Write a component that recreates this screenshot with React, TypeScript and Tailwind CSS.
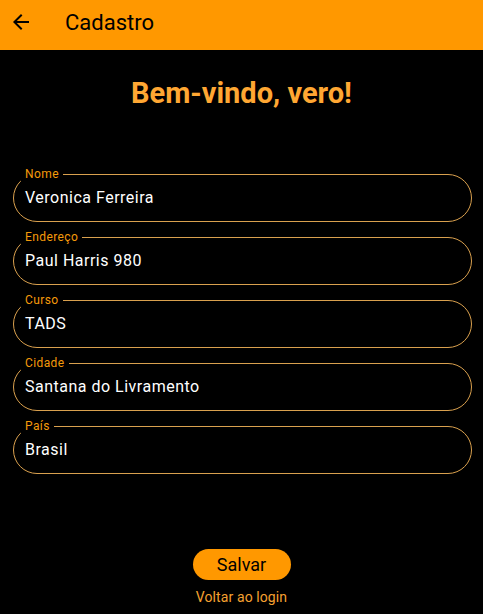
const fields = [
  { label: "Nome", value: "Veronica Ferreira" },
  { label: "Endereço", value: "Paul Harris 980" },
  { label: "Curso", value: "TADS" },
  { label: "Cidade", value: "Santana do Livramento" },
  { label: "País", value: "Brasil" },
];

const Field = ({ label, value }: { label: string; value: string }) => (
  <fieldset className="w-full rounded-[24px] border border-[#d9a04e] pl-[7px] pr-3">
    <legend className="px-1 text-[12px] leading-[16px] tracking-[0.4px] text-[#f59a0a]">{label}</legend>
    <div className="h-[39px] pl-[4px] pt-[6px] text-[16px] leading-[19px] tracking-[0.5px] text-white">{value}</div>
  </fieldset>
);

export default function App() {
  return (
    <div className="flex h-[614px] w-[483px] flex-col bg-black font-['Roboto',sans-serif]">
      <header className="flex h-[50px] shrink-0 items-center bg-[#ff9800] pb-[6px]">
        <svg viewBox="0 0 24 24" className="ml-[9px] h-6 w-6 fill-black">
          <path d="M20 11H7.83l5.59-5.59L12 4l-8 8 8 8 1.41-1.41L7.83 13H20v-2z" />
        </svg>
        <h1 className="ml-[32px] text-[22px] text-black">Cadastro</h1>
      </header>
      <h2 className="mt-[26px] text-center text-[29px] font-bold leading-[34px] text-[#ffa733]">Bem-vindo, vero!</h2>
      <div className="mt-[56px] flex flex-col gap-[7px] pl-[13px] pr-[11px]">
        {fields.map((f) => (
          <Field key={f.label} label={f.label} value={f.value} />
        ))}
      </div>
      <div className="mt-auto flex flex-col items-center pb-[8px]">
        <button className="h-[31px] w-[98px] rounded-full bg-[#ff9800] text-[18px] text-black">Salvar</button>
        <a className="mt-[8px] text-[14px] leading-[18px] tracking-[0.1px] text-[#f5a030]">Voltar ao login</a>
      </div>
    </div>
  );
}
